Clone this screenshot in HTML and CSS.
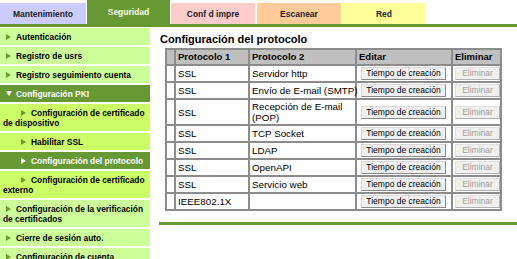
FILE: index.html
```html
<!DOCTYPE html>
<html lang="es">
    <head>
        <meta charset="UTF-8">
        <title>Configuración del protocolo</title>
        <link rel="stylesheet" href="styles.css">
    </head>
    <body>
        <div class="tabs">
            <div class="tab tab-mant">Mantenimiento</div>
            <div class="tab tab-seg active">Seguridad</div>
            <div class="tab tab-conf">Conf d impre</div>
            <div class="tab tab-scan">Escanear</div>
            <div class="tab tab-red">Red</div>
        </div>
        <div class="page">
            <ul class="menu">
                <li>Autenticación</li>
                <li>Registro de usrs</li>
                <li>Registro seguimiento cuenta</li>
                <li class="open">Configuración PKI</li>
                <li class="sub">Configuración de certificado de dispositivo</li>
                <li class="sub">Habilitar SSL</li>
                <li class="sub current">Configuración del protocolo</li>
                <li class="sub">Configuración de certificado externo</li>
                <li>Configuración de la verificación de certificados</li>
                <li>Cierre de sesión auto.</li>
                <li>Configuración de cuenta</li>
            </ul>
            <div class="content">
                <h2 class="title">Configuración del protocolo</h2>
                <table class="proto">
                    <colgroup>
                        <col class="c0"><col class="c1"><col class="c2"><col class="c3"><col class="c4">
                    </colgroup>
                    <tr>
                        <th></th><th>Protocolo 1</th><th>Protocolo 2</th><th>Editar</th><th>Eliminar</th>
                    </tr>
                    <tr>
                        <td></td><td>SSL</td><td>Servidor http</td>
                        <td><button class="btn">Tiempo de creación</button></td>
                        <td><button class="btn del" disabled>Eliminar</button></td>
                    </tr>
                    <tr>
                        <td></td><td>SSL</td><td>Envío de E-mail (SMTP)</td>
                        <td><button class="btn">Tiempo de creación</button></td>
                        <td><button class="btn del" disabled>Eliminar</button></td>
                    </tr>
                    <tr>
                        <td></td><td>SSL</td><td>Recepción de E-mail<br>(POP)</td>
                        <td><button class="btn">Tiempo de creación</button></td>
                        <td><button class="btn del" disabled>Eliminar</button></td>
                    </tr>
                    <tr>
                        <td></td><td>SSL</td><td>TCP Socket</td>
                        <td><button class="btn">Tiempo de creación</button></td>
                        <td><button class="btn del" disabled>Eliminar</button></td>
                    </tr>
                    <tr>
                        <td></td><td>SSL</td><td>LDAP</td>
                        <td><button class="btn">Tiempo de creación</button></td>
                        <td><button class="btn del" disabled>Eliminar</button></td>
                    </tr>
                    <tr>
                        <td></td><td>SSL</td><td>OpenAPI</td>
                        <td><button class="btn">Tiempo de creación</button></td>
                        <td><button class="btn del" disabled>Eliminar</button></td>
                    </tr>
                    <tr>
                        <td></td><td>SSL</td><td>Servicio web</td>
                        <td><button class="btn">Tiempo de creación</button></td>
                        <td><button class="btn del" disabled>Eliminar</button></td>
                    </tr>
                    <tr>
                        <td></td><td>IEEE802.1X</td><td></td>
                        <td><button class="btn">Tiempo de creación</button></td>
                        <td><button class="btn del" disabled>Eliminar</button></td>
                    </tr>
                </table>
                <div class="rule"></div>
            </div>
        </div>
    </body>
</html>
```

FILE: styles.css
```css
:root {
    --green: #669933;
}

html, body {
    margin: 0;
    padding: 0;
    height: 100%;
    overflow: hidden;
}

body {
    background: #fff;
    color: #000;
    font-family: "Liberation Sans", Arial, sans-serif;
}

/* top tabs */
.tabs {
    display: flex;
    align-items: flex-end;
    height: 24px;
    border-bottom: 3px solid var(--green);
}

.tab {
    width: 84px;
    height: 21px;
    margin-right: 1px;
    display: flex;
    align-items: center;
    justify-content: center;
    font-size: 8.5px;
    font-weight: bold;
    color: #222;
}

.tab-mant { width: 86px; background: #ccccff; }
.tab-seg  { width: 83px; }
.tab-conf { background: #ffcccc; }
.tab-scan { background: #ffcc99; margin-left: 1px; }
.tab-red  { background: #ffff99; }

.tab.active {
    height: 24px;
    background: var(--green);
    color: #ffffe6;
}

/* body */
.page {
    display: flex;
    align-items: flex-start;
}

.menu {
    width: 150px;
    flex: none;
    margin: 1px 0 0 0;
    padding: 0;
    list-style: none;
}

.menu li {
    background: #ccff99;
    border-bottom: 2px solid #fff;
    padding: 4px 0 3px 3px;
    font-size: 8.4px;
    font-weight: bold;
    line-height: 10px;
}

.menu li::before {
    content: "";
    display: inline-block;
    width: 0;
    height: 0;
    border-left: 5px solid #6f9a2f;
    border-top: 3px solid transparent;
    border-bottom: 3px solid transparent;
    margin: 0 5px 0 3px;
    vertical-align: 0;
}

.menu li.sub {
    background: #ccff66;
    text-indent: 15px;
}

.menu li.open,
.menu li.current {
    background: var(--green);
    color: #fff;
}

.menu li.current::before {
    border-left-color: #fff;
}

.menu li.open::before {
    border-left: 3px solid transparent;
    border-right: 3px solid transparent;
    border-top: 5px solid #fff;
    border-bottom: 0;
    margin-right: 4px;
    vertical-align: 1px;
}

.content {
    flex: 1;
    padding: 6px 0 0 9px;
}

.title {
    margin: 0 0 2px 1px;
    font-size: 11px;
    line-height: 13px;
}

/* protocol table */
.proto {
    margin-left: 6px;
    width: 337px;
    table-layout: fixed;
    border-collapse: collapse;
    border: 2px solid #8c8c8c;
    font-size: 9.8px;
}

.c0 { width: 9px; }
.c1 { width: 74px; }
.c2 { width: 107px; }
.c3 { width: 96px; }
.c4 { width: 49px; }

.proto th,
.proto td {
    border: 2px solid #8c8c8c;
    padding: 1px 2px;
    text-align: left;
    line-height: 11px;
    white-space: nowrap;
}

.proto th {
    background: #c0c0c0;
    font-size: 9.5px;
    line-height: 12px;
}

.proto td:first-child,
.proto th:first-child {
    padding: 0;
}

.btn {
    display: block;
    height: 13px;
    width: 85px;
    margin-left: 2px;
    padding: 0;
    font-family: "Liberation Sans", Arial, sans-serif;
    font-size: 8.5px;
    line-height: 11px;
    color: #000;
    background: #f0f0f0;
    border: 1px solid;
    border-color: #d8d8d8 #8a8a8a #8a8a8a #d8d8d8;
}

.btn.del {
    width: 45px;
    margin-left: 0;
    color: #a0a0a0;
    border-color: #e0e0e0 #b0b0b0 #b0b0b0 #e0e0e0;
}

.rule {
    height: 3px;
    margin-top: 11px;
    background: var(--green);
}
```
